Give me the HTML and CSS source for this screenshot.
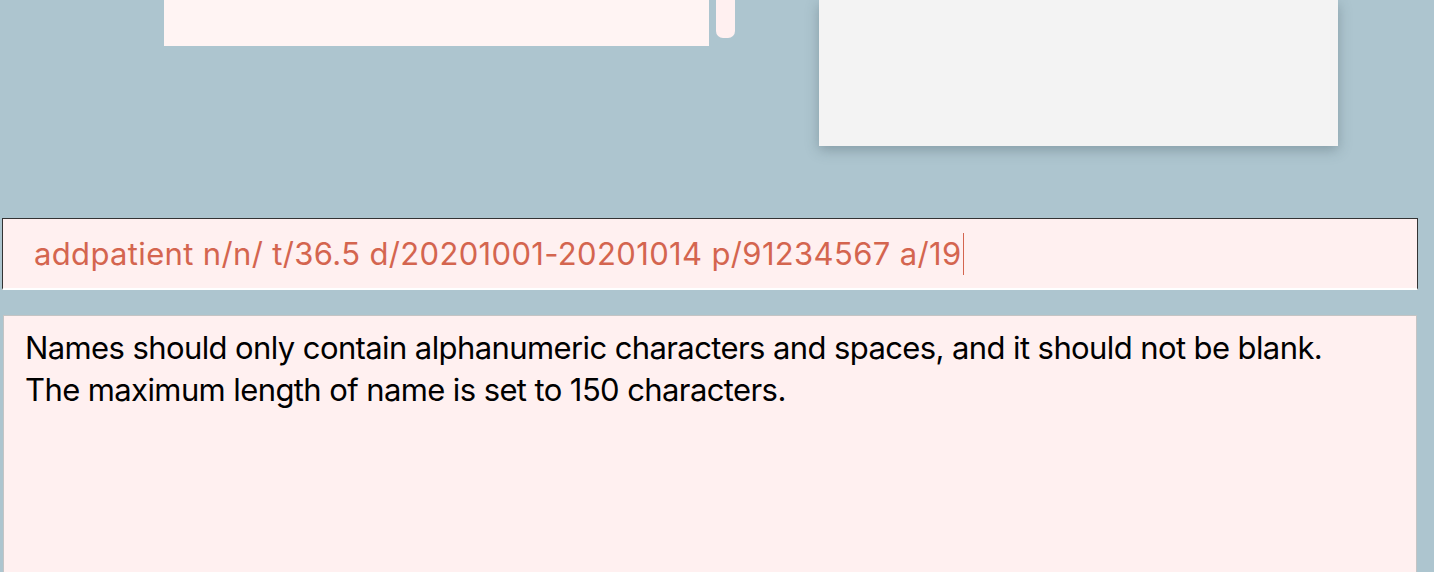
FILE: index.html
```html
<!DOCTYPE html>
<html>
<head>
<meta charset="utf-8">
<link rel="stylesheet" href="styles.css">
</head>
<body>
<div class="app">
  <div class="top">
    <div class="list-panel"></div>
    <div class="scroll-thumb"></div>
    <div class="card"></div>
  </div>
  <div class="command-box">
    <span class="command-text">addpatient n/n/ t/36.5 d/20201001-20201014 p/91234567 a/19</span><span class="caret"></span>
  </div>
  <div class="result-box">
    <p class="result-line">Names should only contain alphanumeric characters and spaces, and it should not be blank.</p>
    <p class="result-line">The maximum length of name is set to 150 characters.</p>
  </div>
</div>
</body>
</html>
```
FILE: styles.css
```css
html, body {
  margin: 0;
  padding: 0;
  background: #adc5cf;
  overflow: hidden;
}
.app {
  width: 1434px;
  height: 572px;
  display: flex;
  flex-direction: column;
}
.top {
  display: flex;
  align-items: flex-start;
  height: 218px;
  flex: none;
}
.list-panel {
  margin-left: 164px;
  width: 545px;
  height: 46px;
  background: #fff4f3;
}
.scroll-thumb {
  margin-left: 7px;
  width: 19px;
  height: 38px;
  background: #fff0f0;
  border-radius: 0 0 7px 7px;
}
.card {
  margin-left: 84px;
  width: 519px;
  height: 146px;
  background: #f3f3f3;
  box-shadow: 0 4px 12px rgba(60, 80, 90, 0.35);
}
.command-box {
  margin-left: 2px;
  width: 1416px;
  height: 72px;
  flex: none;
  background: #fff0f0;
  border: 1px solid #333333;
  border-bottom: 2px solid #ffffff;
  display: flex;
  align-items: center;
  padding-left: 31px;
  box-sizing: border-box;
  font-family: Inter, "Liberation Sans", sans-serif;
  font-size: 31px;
  letter-spacing: 0.35px;
  color: #d4654f;
}
.command-text {
  white-space: pre;
}
.caret {
  display: inline-block;
  width: 1px;
  height: 42px;
  background: #d4654f;
  margin-left: 1px;
}
.result-box {
  margin-top: 25px;
  margin-left: 3px;
  width: 1414px;
  flex: 1;
  background: #fff0f0;
  border: 1px solid #c4c4c4;
  border-bottom: none;
  padding: 11px 21px;
  box-sizing: border-box;
  font-family: Inter, "Liberation Sans", sans-serif;
  font-size: 31px;
  letter-spacing: -0.6px;
  color: #000000;
  line-height: 42px;
}
.result-line {
  margin: 0;
}
```
